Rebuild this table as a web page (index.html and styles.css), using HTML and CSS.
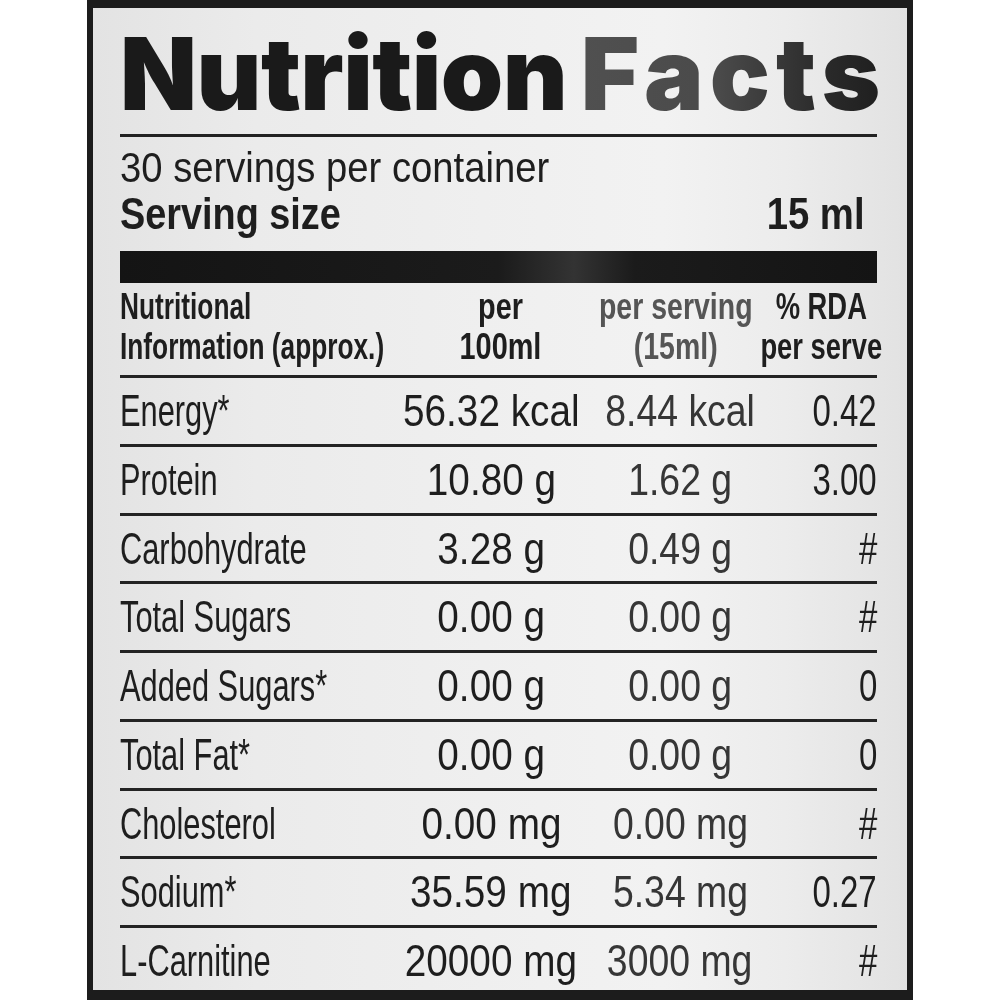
FILE: index.html
```html
<!DOCTYPE html>
<html lang="en">
<head>
<meta charset="utf-8">
<title>Nutrition Facts</title>
<link rel="stylesheet" href="styles.css">
</head>
<body>
<div class="label">
  <div class="inner">
    <h1 class="title"><span class="t-dark">Nutrition</span> <span class="t-grey">Facts</span></h1>
    <div class="rule"></div>
    <p class="servings"><span class="sx sx-serv">30 servings per container</span></p>
    <div class="size-row">
      <span class="sx sx-size">Serving size</span>
      <span class="sx sx-ml">15 ml</span>
    </div>
    <div class="bar"></div>
    <div class="table">
      <div class="row head">
        <div class="cell c0"><span class="sx h0">Nutritional<br>Information (approx.)</span></div>
        <div class="cell c1 hc1"><span class="sx h1">per<br>100ml</span></div>
        <div class="cell c2 hc2"><span class="sx h2">per serving<br>(15ml)</span></div>
        <div class="cell c3 hc3"><span class="sx h3">% RDA<br>per serve</span></div>
      </div>
      <div class="row">
        <div class="cell c0"><span class="sx v0">Energy*</span></div>
        <div class="cell c1"><span class="sx v1">56.32 kcal</span></div>
        <div class="cell c2"><span class="sx v2">8.44 kcal</span></div>
        <div class="cell c3"><span class="sx v3">0.42</span></div>
      </div>
      <div class="row">
        <div class="cell c0"><span class="sx v0">Protein</span></div>
        <div class="cell c1"><span class="sx v1">10.80 g</span></div>
        <div class="cell c2"><span class="sx v2">1.62 g</span></div>
        <div class="cell c3"><span class="sx v3">3.00</span></div>
      </div>
      <div class="row">
        <div class="cell c0"><span class="sx v0">Carbohydrate</span></div>
        <div class="cell c1"><span class="sx v1">3.28 g</span></div>
        <div class="cell c2"><span class="sx v2">0.49 g</span></div>
        <div class="cell c3"><span class="sx v3">#</span></div>
      </div>
      <div class="row">
        <div class="cell c0"><span class="sx v0">Total Sugars</span></div>
        <div class="cell c1"><span class="sx v1">0.00 g</span></div>
        <div class="cell c2"><span class="sx v2">0.00 g</span></div>
        <div class="cell c3"><span class="sx v3">#</span></div>
      </div>
      <div class="row">
        <div class="cell c0"><span class="sx v0">Added Sugars*</span></div>
        <div class="cell c1"><span class="sx v1">0.00 g</span></div>
        <div class="cell c2"><span class="sx v2">0.00 g</span></div>
        <div class="cell c3"><span class="sx v3">0</span></div>
      </div>
      <div class="row">
        <div class="cell c0"><span class="sx v0">Total Fat*</span></div>
        <div class="cell c1"><span class="sx v1">0.00 g</span></div>
        <div class="cell c2"><span class="sx v2">0.00 g</span></div>
        <div class="cell c3"><span class="sx v3">0</span></div>
      </div>
      <div class="row">
        <div class="cell c0"><span class="sx v0">Cholesterol</span></div>
        <div class="cell c1"><span class="sx v1">0.00 mg</span></div>
        <div class="cell c2"><span class="sx v2">0.00 mg</span></div>
        <div class="cell c3"><span class="sx v3">#</span></div>
      </div>
      <div class="row">
        <div class="cell c0"><span class="sx v0">Sodium*</span></div>
        <div class="cell c1"><span class="sx v1">35.59 mg</span></div>
        <div class="cell c2"><span class="sx v2">5.34 mg</span></div>
        <div class="cell c3"><span class="sx v3">0.27</span></div>
      </div>
      <div class="row last">
        <div class="cell c0"><span class="sx v0">L-Carnitine</span></div>
        <div class="cell c1"><span class="sx v1">20000 mg</span></div>
        <div class="cell c2"><span class="sx v2">3000 mg</span></div>
        <div class="cell c3"><span class="sx v3">#</span></div>
      </div>
    </div>
  </div>
</div>
</body>
</html>
```
FILE: styles.css
```css
html, body {
  margin: 0;
  padding: 0;
  background: #ffffff;
}

body {
  font-family: "Liberation Sans", Arial, sans-serif;
  color: #1e1e1e;
}

.label {
  box-sizing: border-box;
  width: 826px;
  height: 1000px;
  margin-left: 87px;
  border: 6px solid #1c1c1c;
  border-top-width: 8px;
  border-bottom-width: 10px;
  background: linear-gradient(90deg, #e3e3e3 0%, #ebebeb 20%, #f0f0f0 55%, #f2f2f2 70%, #ececec 85%, #e2e2e2 100%);
  overflow: hidden;
}

.inner {
  padding: 16px 30px 0 27px;
}

.title {
  margin: 0;
  height: 110px;
  font-family: "Inter", "Liberation Sans", sans-serif;
  font-weight: 900;
  font-size: 100px;
  line-height: 100px;
  white-space: nowrap;
  letter-spacing: -0.5px;
  word-spacing: -6px;
}

.t-dark {
  color: #1a1a1a;
}

.t-grey {
  letter-spacing: 6px;
  background: linear-gradient(90deg, #505050 0%, #4a4a4a 45%, #2a2a2a 80%, #1e1e1e 100%);
  -webkit-background-clip: text;
  background-clip: text;
  color: transparent;
}

.rule {
  height: 3px;
  background: #222222;
}

.sx {
  display: inline-block;
  white-space: nowrap;
}

.servings {
  margin: 0;
  padding-top: 8px;
  font-size: 42px;
  line-height: 46px;
  height: 46px;
}

.sx-serv {
  transform: scaleX(0.91);
  transform-origin: left center;
}

.size-row {
  display: flex;
  justify-content: space-between;
  font-weight: bold;
  font-size: 44px;
  line-height: 46px;
  height: 46px;
  padding-right: 12px;
}

.sx-size {
  transform: scaleX(0.86);
  transform-origin: left center;
}

.sx-ml {
  transform: scaleX(0.87);
  transform-origin: right center;
}

.bar {
  margin-top: 14px;
  height: 32px;
  background: linear-gradient(90deg, #141414 0%, #1b1b1b 50%, #333333 60%, #1b1b1b 68%, #141414 100%);
}

.row {
  display: grid;
  grid-template-columns: 280px 182px 196px 1fr;
  height: 65.75px;
  border-bottom: 3px solid #232323;
  font-size: 44px;
  line-height: 65.75px;
}

.row.last {
  border-bottom: none;
}

.row.head {
  height: 88px;
  padding-top: 4px;
  font-size: 37px;
  line-height: 40px;
  font-weight: bold;
  align-items: start;
}

.cell {
  display: flex;
  min-width: 0;
}

.c0 {
  justify-content: flex-start;
}

.c1, .c2 {
  justify-content: center;
}

.c3 {
  justify-content: flex-end;
}

.head .cell .sx {
  text-align: center;
}

.head .c0 .sx {
  text-align: left;
}

.hc1 {
  padding-left: 18px;
}

.hc2 {
  padding-right: 8px;
  color: #555555;
}

.hc3 {
  justify-content: center;
  padding-right: 12px;
}

.h0 {
  transform: scaleX(0.71);
  transform-origin: left center;
}

.h1 {
  transform: scaleX(0.78);
}

.h2 {
  transform: scaleX(0.77);
}

.h3 {
  transform: scaleX(0.74);
}

.v0 {
  transform: scaleX(0.7);
  transform-origin: left center;
}

.v1 {
  transform: scaleX(0.88);
}

.v2 {
  transform: scaleX(0.85);
  color: #363636;
}

.v3 {
  transform: scaleX(0.75);
  transform-origin: right center;
}
```
